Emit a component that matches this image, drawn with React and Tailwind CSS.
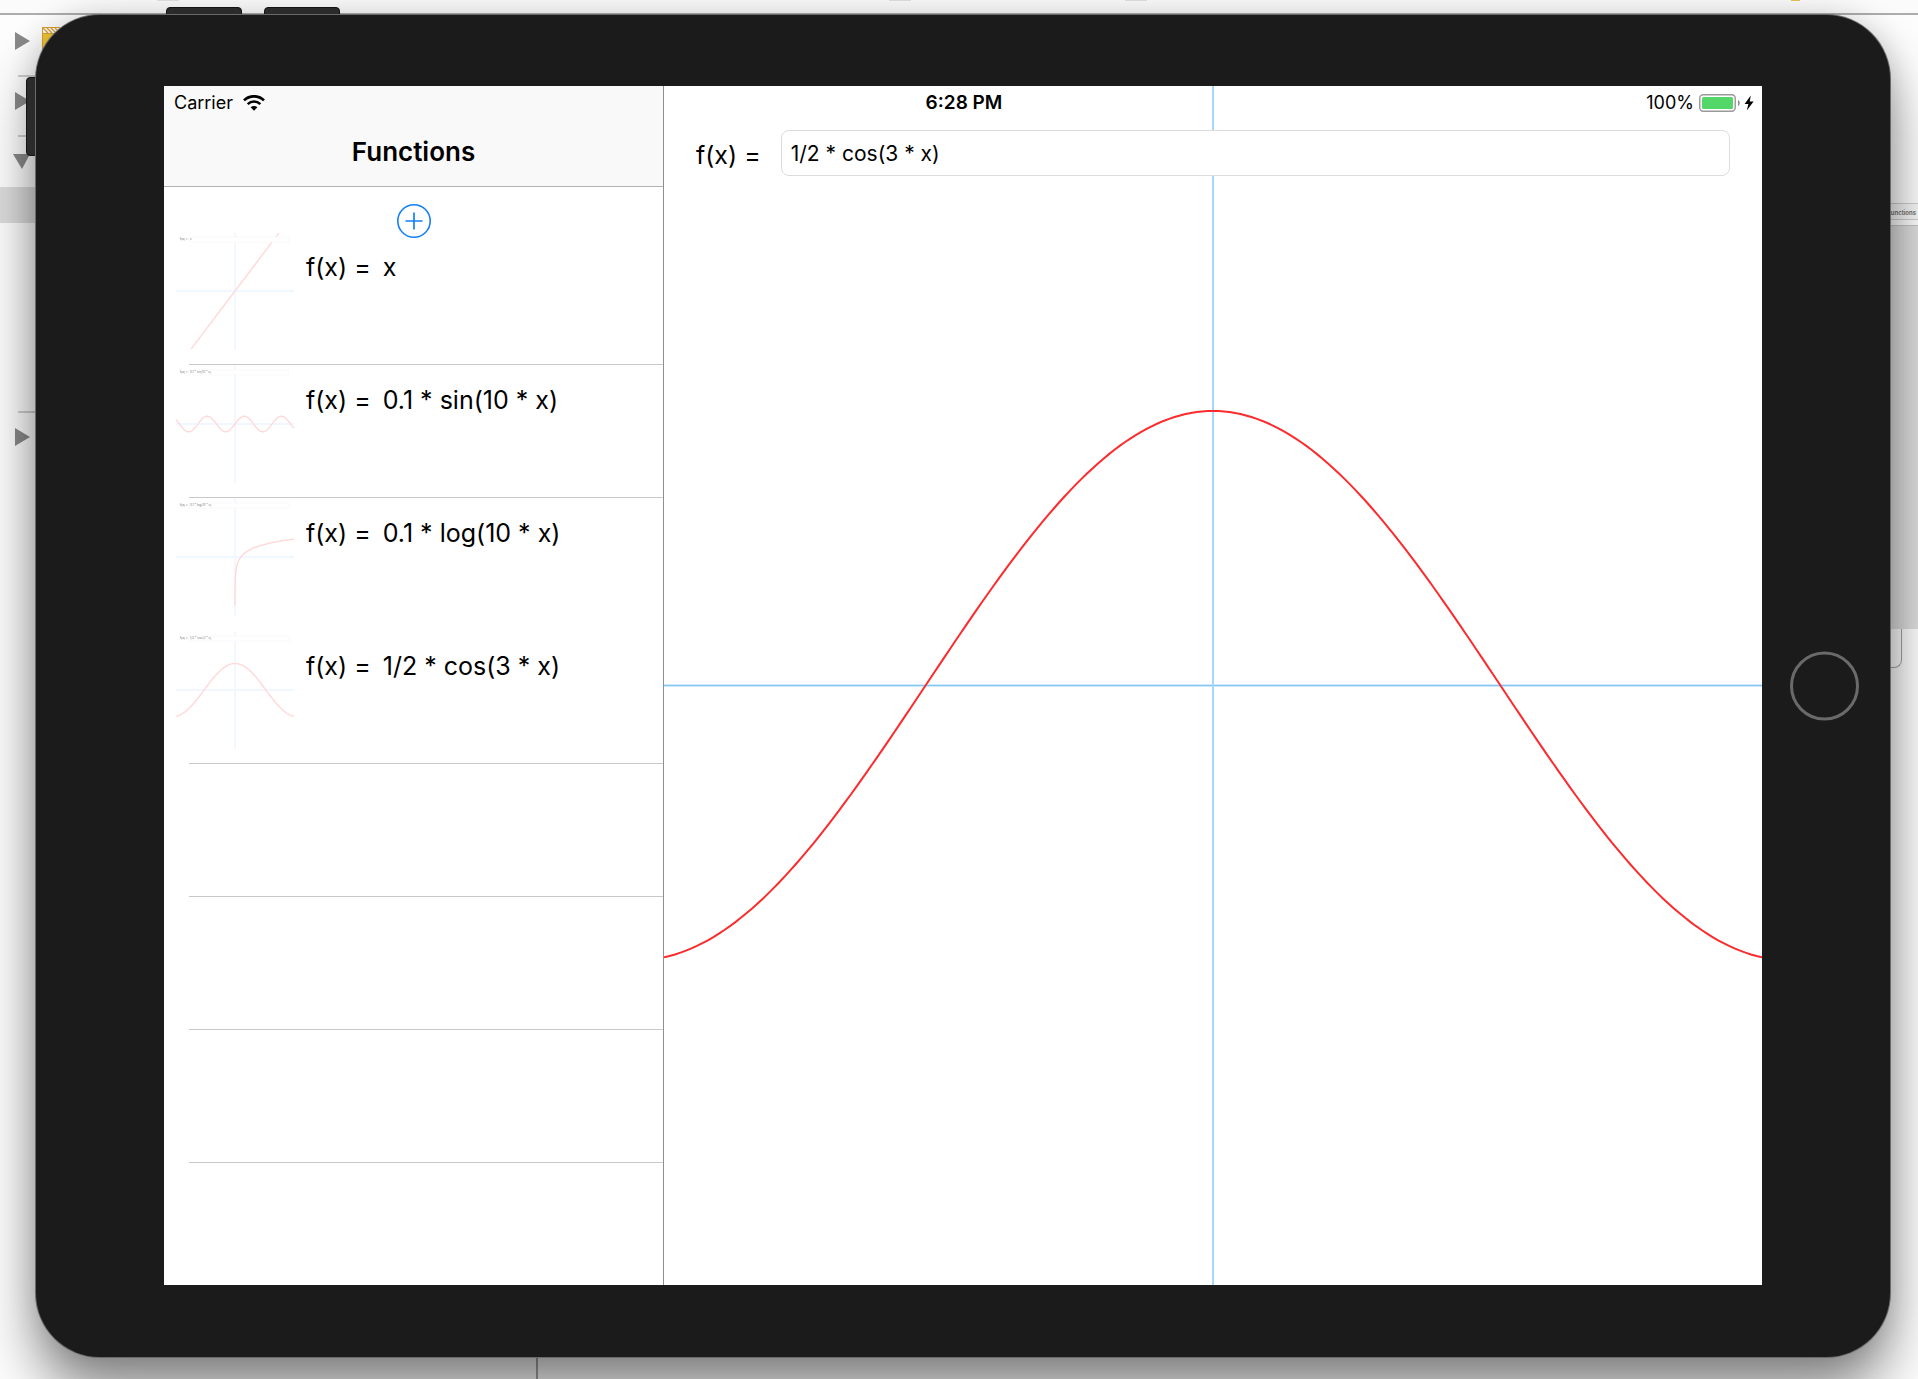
import { useId, useState } from "react";

const range = (from, to, step) => {
  const out = [];
  for (let v = from; v <= to + step / 2; v += step) out.push(v);
  return out;
};

const pathOf = (fn, xs, sx, sy) =>
  xs.map((x, i) => `${i ? "L" : "M"}${(x * sx).toFixed(2)} ${(-fn(x) * sy).toFixed(2)}`).join("");

const FUNCTIONS = [
  { text: "x", fn: (x) => x, xs: [-0.745, 0.745], unit: 78 },
  { text: "0.1 * sin(10 * x)", fn: (x) => 0.1 * Math.sin(10 * x), xs: range(-1, 1, 0.01), unit: 78 },
  {
    text: "0.1 * log(10 * x)",
    fn: (x) => 0.1 * Math.log(10 * x),
    xs: [0.0002, 0.001, 0.003, 0.006, ...range(0.01, 1, 0.01)],
    unit: 78,
    joined: true,
  },
  { text: "1/2 * cos(3 * x)", fn: (x) => 0.5 * Math.cos(3 * x), xs: range(-1, 1, 0.01), unit: 53 },
];

const EMPTY_ROWS = [1, 2, 3, 4];

function Thumbnail({ item }) {
  return (
    <svg viewBox="-59 -58 118 117" className="h-[117px] w-[118px] shrink-0" aria-hidden="true">
      <path d="M-59 0H59" stroke="#f0f7fe" strokeWidth="2" />
      <path d="M0 -58V59" stroke="#f2f8fe" strokeWidth="2" />
      <path d={pathOf(item.fn, item.xs, 59, item.unit)} fill="none" stroke="#ffd9d9" strokeWidth="1.4" />
      <rect x="-46" y="-54" width="100" height="5" fill="#fff" stroke="#f9f9f9" />
      <text x="-55" y="-51" fontSize="3" fill="#555">f(x) =</text>
      <text x="-45" y="-51" fontSize="3" fill="#777">{item.text}</text>
    </svg>
  );
}

function StatusBar() {
  return (
    <div className="absolute inset-x-0 top-0 z-10 grid h-[33px] grid-cols-3 items-center pr-2 pl-[10px] text-[18px] leading-6">
      <div className="flex items-center gap-[10px]">
        <span>Carrier</span>
        <svg viewBox="0 0 22 16" className="h-4 w-[22px]" aria-label="Wi-Fi">
          <path d="M1 5.4C6.6 -.1 15.4 -.1 21 5.4" fill="none" stroke="#000" strokeWidth="2.7" />
          <path d="M4.7 9.1C8.3 5.7 13.7 5.7 17.3 9.1" fill="none" stroke="#000" strokeWidth="2.6" />
          <path d="M7.6 12.3C9.5 10.6 12.5 10.6 14.4 12.3L11 15.8Z" fill="#000" />
        </svg>
      </div>
      <div className="text-center text-[19px] font-semibold">6:28 PM</div>
      <div className="flex items-center justify-end">
        <span>100%</span>
        <svg viewBox="0 0 42 18" className="ml-[5px] h-[18px] w-[42px]" aria-label="Battery full">
          <rect x=".75" y=".75" width="35.5" height="16.5" rx="3.5" fill="#fff" stroke="#999" strokeWidth="1.4" />
          <rect x="3" y="3" width="31" height="12" rx="1.5" fill="#53d769" />
          <path d="M39 6C41.3 7 41.3 11 39 12Z" fill="#8c8c8c" />
        </svg>
        <svg viewBox="0 0 10 16" className="ml-[3px] h-4 w-[10px]" aria-label="Charging">
          <path d="M6.8 .6L.6 9H4.4L2.8 15.4L9.6 6.6H5.7Z" fill="#000" />
        </svg>
      </div>
    </div>
  );
}

function Sidebar() {
  return (
    <aside className="flex w-[500px] shrink-0 flex-col border-r border-[#8e8e93] bg-white">
      <header className="border-b border-[#b2b2b2] bg-[#f9f9f9] pt-8">
        <h1 className="text-center text-[26px] leading-[68px] font-semibold">Functions</h1>
      </header>
      <div className="flex h-[45px] justify-center pt-[17px]">
        <button
          type="button"
          aria-label="Add function"
          className="relative z-10 size-[34px] text-[#157efb]"
        >
          <svg viewBox="0 0 34 34" className="size-[34px]" fill="none" stroke="currentColor">
            <circle cx="17" cy="17" r="16.2" strokeWidth="1.6" />
            <path d="M17 8.5V25.5M8.5 17H25.5" strokeWidth="1.7" />
          </svg>
        </button>
      </div>
      <ul>
        {FUNCTIONS.map((item) => (
          <li key={item.text} className="relative h-[133px]">
            <button type="button" className="flex w-full items-start gap-3 pt-px pl-3 text-left">
              <Thumbnail item={item} />
              <span className="flex gap-3 pt-[18px] text-[25px] leading-8">
                <span>f(x) =</span>
                <span>{item.text}</span>
              </span>
            </button>
            {!item.joined && <div className="absolute right-0 bottom-0 left-[25px] h-px bg-[#c8c7cc]" />}
          </li>
        ))}
        {EMPTY_ROWS.map((n) => (
          <li key={n} className="h-[133px] pl-[25px] last:h-[122px]">
            {n < 4 && <div className="h-full border-b border-[#c8c7cc]" />}
          </li>
        ))}
      </ul>
    </aside>
  );
}

function Plot() {
  const cosine = FUNCTIONS[3];
  return (
    <svg
      viewBox="-549 -599.5 1098 1199"
      preserveAspectRatio="xMidYMid slice"
      className="absolute inset-0 h-full w-full"
      aria-label="Graph of the function"
    >
      <path d="M-549 0H549" stroke="#cfeafe" strokeWidth="3" />
      <path d="M-549 0H549" stroke="#86c6f4" strokeWidth="1" />
      <path d="M0 -600V600" stroke="#a6d7fc" strokeWidth="2" />
      <path d={pathOf(cosine.fn, cosine.xs, 549, 549)} fill="none" stroke="#fc2b2d" strokeWidth="2" />
    </svg>
  );
}

function Detail() {
  const id = useId();
  const [value, setValue] = useState("1/2 * cos(3 * x)");
  return (
    <main className="relative min-w-0 flex-1 bg-white">
      <Plot />
      <div className="relative flex items-center gap-5 pt-11 pr-8 pl-8">
        <label htmlFor={id} className="shrink-0 pt-1 text-[25px] leading-8">
          f(x) =
        </label>
        <input
          id={id}
          type="text"
          value={value}
          onChange={(e) => setValue(e.target.value)}
          className="h-[46px] min-w-0 flex-1 rounded-lg border border-[#dcdcdc] bg-white px-[9px] text-[21px] outline-none"
        />
      </div>
    </main>
  );
}

function Backdrop() {
  return (
    <div className="absolute inset-0 overflow-hidden bg-[#fdfdfd]" aria-hidden="true">
      <div className="absolute inset-x-0 top-0 h-[13px] bg-[#fbfbfb]" />
      <div className="absolute inset-x-0 top-[13px] h-[2px] bg-[#adadad]" />
      <div className="absolute top-0 left-[157px] h-px w-[22px] bg-[#e2e2e2]" />
      <div className="absolute top-0 left-[889px] h-px w-[22px] bg-[#e0e0e0]" />
      <div className="absolute top-0 left-[1125px] h-px w-[22px] bg-[#e0e0e0]" />
      <div className="absolute top-0 right-[118px] h-px w-[9px] bg-[#eebf55]" />
      <div className="absolute top-[187px] left-0 h-9 w-[60px] bg-[#dcdcdc]" />
      <div className="absolute bottom-0 left-[536px] h-10 w-[2px] bg-[#a5a5a5]" />
      <svg viewBox="0 0 60 460" className="absolute top-0 left-0 h-[460px] w-[60px]">
        <path d="M18 76H60M18 136H60M18 412H60" stroke="#cfcfcf" strokeWidth="2" />
        <path d="M15 32L30 41L15 50ZM15 92L30 101L15 110ZM13 154H30L22 169ZM15 428L30 437L15 446Z" fill="#8a8a8a" />
        <rect x="42.500" y="27.500" width="20" height="30" fill="#f5c836" stroke="#dfa02c" />
        <rect x="43" y="28" width="20" height="5" fill="#fff" />
        <path d="M43 28L48 33M47 28L52 33M51 28L56 33M55 28L60 33M43 33.500H60" stroke="#dfa02c" strokeWidth="1.200" />
      </svg>
      <div className="absolute top-[203px] right-0 h-[17px] w-10 border-y border-[#cfcfcf] bg-[#f7f7f7] pr-[2px] text-right text-[6px] leading-[17px] font-semibold text-[#666]">
        Functions
      </div>
      <div className="absolute top-[225px] right-0 h-[404px] w-10 border-t border-[#c4c4c4] bg-[#dedede]" />
      <div className="absolute top-[629px] right-4 h-[39px] w-10 rounded-br-lg border-r border-b border-[#a5a5a5]" />
    </div>
  );
}

export default function App() {
  return (
    <div className="relative flex min-h-screen flex-col overflow-hidden pt-[15px] pr-7 pb-[22px] pl-9 font-['Inter','Liberation_Sans',sans-serif] text-black">
      <Backdrop />
      <div className="relative flex flex-1 rounded-[64px] shadow-[0_36px_56px_rgba(0,0,0,0.46),0_0_30px_rgba(0,0,0,0.14)]">
        <div className="absolute -top-2 left-[130px] h-6 w-[76px] rounded border border-[#141414] bg-[#2b2b2b]" />
        <div className="absolute -top-2 left-[228px] h-6 w-[76px] rounded border border-[#141414] bg-[#2b2b2b]" />
        <div className="absolute top-[62px] -left-[10px] h-[79px] w-6 rounded border border-[#141414] bg-[#2b2b2b]" />
        <div className="relative flex min-w-0 flex-1 rounded-[64px] bg-[#1b1b1b] px-32 pt-[71px] pb-[72px] shadow-[0_0_0_1px_#6a6a6a]">
          <div className="relative flex min-w-0 flex-1 bg-white">
            <StatusBar />
            <Sidebar />
            <Detail />
          </div>
          <button
            type="button"
            aria-label="Home"
            className="absolute top-1/2 right-[31px] size-[69px] -translate-y-1/2 rounded-full border-[3px] border-[#6a6a6a]"
          />
        </div>
      </div>
    </div>
  );
}
